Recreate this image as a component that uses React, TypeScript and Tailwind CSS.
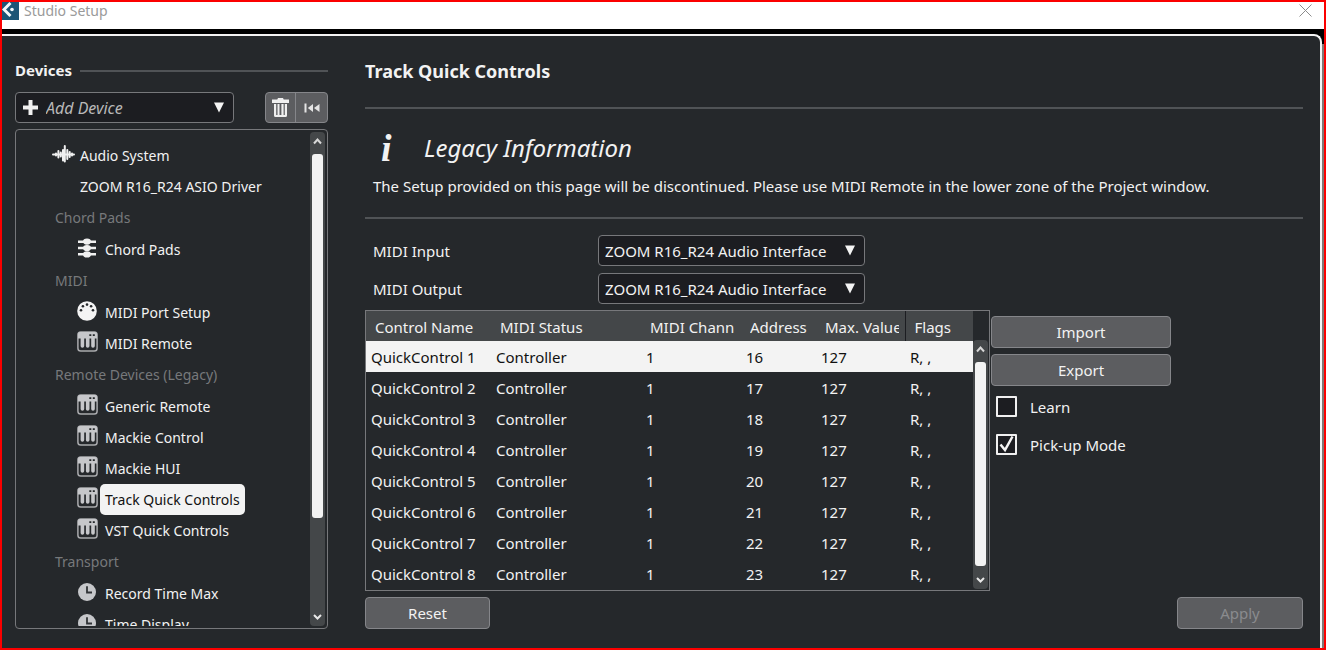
import React, { useState } from 'react';
import clsx from 'clsx';

type IconName = 'wave' | 'chord' | 'midi' | 'remote' | 'clock';

interface Device {
  name: string;
  icon: IconName;
}

interface DeviceGroup {
  title: string;
  devices: Device[];
}

const groups: DeviceGroup[] = [
  { title: 'Chord Pads', devices: [{ name: 'Chord Pads', icon: 'chord' }] },
  {
    title: 'MIDI',
    devices: [
      { name: 'MIDI Port Setup', icon: 'midi' },
      { name: 'MIDI Remote', icon: 'remote' },
    ],
  },
  {
    title: 'Remote Devices (Legacy)',
    devices: [
      { name: 'Generic Remote', icon: 'remote' },
      { name: 'Mackie Control', icon: 'remote' },
      { name: 'Mackie HUI', icon: 'remote' },
      { name: 'Track Quick Controls', icon: 'remote' },
      { name: 'VST Quick Controls', icon: 'remote' },
    ],
  },
  {
    title: 'Transport',
    devices: [
      { name: 'Record Time Max', icon: 'clock' },
      { name: 'Time Display', icon: 'clock' },
    ],
  },
];

const columns = [
  { label: 'Control Name', width: 'w-[125px]' },
  { label: 'MIDI Status', width: 'w-[150px]' },
  { label: 'MIDI Chann', width: 'w-[100px]' },
  { label: 'Address', width: 'w-[75px]' },
  { label: 'Max. Value', width: 'w-[89px]' },
  { label: 'Flags', width: 'w-[68px]' },
];

const controls = [16, 17, 18, 19, 20, 21, 22, 23].map((address, i) => ({
  name: `QuickControl ${i + 1}`,
  status: 'Controller',
  channel: 1,
  address,
  max: 127,
  flags: 'R, ,',
}));

function DeviceIcon({ icon }: { icon: IconName }) {
  switch (icon) {
    case 'wave':
      return (
        <svg width="23" height="18" viewBox="0 0 23 18" stroke="#f0f0f0" strokeWidth="2" strokeLinecap="round" fill="none">
          <path d="M1 9.5h21M4 8.5v2M6.4 6v6.5M8.8 7.5v4M11 5v10.5M12.8 1v15.5M15.3 5v9M17.7 7v5M20 8.5v2" />
        </svg>
      );
    case 'chord':
      return (
        <svg width="20" height="20" viewBox="0 0 20 20" fill="#f0f0f0">
          <path d="M1 2.5h18v2.4H1zM1 8.8h18v2.4H1zM1 15.1h18v2.4H1z" />
          <ellipse cx="10" cy="3.6" rx="4" ry="3.1" />
          <ellipse cx="10" cy="10" rx="4" ry="3.1" />
          <ellipse cx="10" cy="16.4" rx="4" ry="3.1" />
        </svg>
      );
    case 'midi':
      return (
        <svg width="20" height="20" viewBox="0 0 20 20">
          <circle cx="10" cy="10" r="9.8" fill="#f4f4f4" />
          <g fill="#25282b">
            <circle cx="4" cy="9.2" r="1.3" />
            <circle cx="5.9" cy="5.2" r="1.3" />
            <circle cx="10" cy="3.6" r="1.3" />
            <circle cx="14.1" cy="5.2" r="1.3" />
            <circle cx="16" cy="9.2" r="1.3" />
          </g>
        </svg>
      );
    case 'remote':
      return (
        <svg width="21" height="21" viewBox="0 0 21 21">
          <rect x="0.9" y="0.9" width="19.2" height="19.2" rx="2.8" fill="#25282b" stroke="#a9aaad" strokeWidth="1.5" />
          <path d="M1 3a2 2 0 0 1 2-2h15a2 2 0 0 1 2 2v4.5H1z" fill="#c6c7ca" />
          <path d="M3.6 7h3.6v8a1.8 1.8 0 0 1-3.6 0zM8.9 7h3.6v8a1.8 1.8 0 0 1-3.6 0zM14.2 7h3.6v8a1.8 1.8 0 0 1-3.6 0z" fill="#c6c7ca" />
          <path d="M12.3 3.2h2v1.8h-2zM15.8 3.2h2v1.8h-2z" fill="#25282b" />
        </svg>
      );
    case 'clock':
      return (
        <svg width="20" height="20" viewBox="0 0 20 20">
          <circle cx="10" cy="10" r="9" fill="#c6c7ca" />
          <path d="M10 4.2v6.3h5" stroke="#303336" strokeWidth="1.8" fill="none" />
        </svg>
      );
  }
}

function Caret({ className }: { className?: string }) {
  return (
    <svg className={clsx('pointer-events-none absolute', className)} width="10" height="11" viewBox="0 0 10 11" fill="#f4f4f4">
      <path d="M0 0.5h10L5 10.5z" />
    </svg>
  );
}

function ScrollBar({ thumb }: { thumb: string }) {
  return (
    <div className="flex w-[15px] shrink-0 flex-col items-center rounded-sm bg-[#444749]">
      <svg className="h-[22px] shrink-0" width="9" height="22" viewBox="0 0 9 22" fill="none" stroke="#d8d8d8" strokeWidth="2">
        <path d="M1 11.5L4.5 7.5L8 11.5" />
      </svg>
      <div className="flex w-[11px] flex-1 flex-col">
        <div className={clsx('rounded-[3px] bg-[#f3f3f3]', thumb)} />
      </div>
      <svg className="h-[22px] shrink-0" width="9" height="22" viewBox="0 0 9 22" fill="none" stroke="#e8e8e8" strokeWidth="2">
        <path d="M1 11L4.5 14.5L8 11" />
      </svg>
    </div>
  );
}

function PortSelect({ id, label }: { id: string; label: string }) {
  return (
    <div className="flex h-[31px] items-center">
      <label htmlFor={id} className="w-[225px]">{label}</label>
      <div className="relative flex items-center">
        <select id={id} className="h-[31px] w-[267px] appearance-none rounded-[4px] border border-[#77787b] bg-[#1c1d21] pl-1.5 pr-7">
          <option>ZOOM R16_R24 Audio Interface</option>
        </select>
        <Caret className="right-[10px]" />
      </div>
    </div>
  );
}

function PushButton({ children, disabled, className }: { children: React.ReactNode; disabled?: boolean; className: string }) {
  return (
    <button
      disabled={disabled}
      className={clsx('h-8 rounded-[4px] border border-[#85868a] bg-[#5c5d60] disabled:text-[#8a8b8e]', className)}
    >
      {children}
    </button>
  );
}

function CheckBox({ label, defaultChecked }: { label: string; defaultChecked?: boolean }) {
  return (
    <label className="flex h-[21px] items-center gap-[13px]">
      <span className="relative flex">
        <input type="checkbox" defaultChecked={defaultChecked} className="peer size-[21px] appearance-none rounded-[1px] border-2 border-[#f0f0f0] bg-[#1c1d21]" />
        <svg className="pointer-events-none absolute inset-0 hidden peer-checked:block" width="21" height="21" viewBox="0 0 21 21" fill="none" stroke="#f4f4f4" strokeWidth="2.5">
          <path d="M4.5 10.5L9 16L16.5 2.5" />
        </svg>
      </span>
      {label}
    </label>
  );
}

export default function App() {
  const [device, setDevice] = useState('Track Quick Controls');
  const [selected, setSelected] = useState(0);

  const deviceButton = (name: string) => (
    <button
      onClick={() => setDevice(name)}
      className={clsx('h-[31px] whitespace-nowrap rounded-[5px] px-[5px]', name === device && 'bg-[#f3f3f3] text-[#111]')}
    >
      {name}
    </button>
  );

  return (
    <div className="flex h-screen flex-col border-2 border-[#fb0000] bg-black font-['Noto_Sans','Open_Sans',sans-serif] text-[15px] leading-5 text-[#f2f2f2]">
      <header className="flex h-[27px] shrink-0 items-start justify-between bg-white pr-3 text-sm leading-[18px] text-[#9a9a9a]">
        <div className="flex items-start gap-[5px]">
          <svg width="17" height="18" viewBox="0 0 17 18">
            <path d="M0 0h17v18H0z" fill="#1d5576" />
            <path d="M8.5 1L2 7.5L8.5 14" stroke="#f4f8fa" strokeWidth="3" fill="none" />
            <circle cx="10" cy="7.5" r="1.8" fill="#f4f8fa" />
          </svg>
          <span>Studio Setup</span>
        </div>
        <button aria-label="Close" className="pt-0.5">
          <svg width="13" height="13" viewBox="0 0 13 13" stroke="#8c8c8c" strokeWidth="1">
            <path d="M0.5 0.5l12 12M12.5 0.5l-12 12" />
          </svg>
        </button>
      </header>

      <div className="mt-[5px] flex min-h-0 flex-1 bg-gradient-to-b from-black from-[10px] to-[#7d7a78] to-[10px] pr-0.5">
        <div className="flex min-h-0 flex-1 gap-[37px] rounded-tr-lg border-t-2 border-r-2 border-[#f4f4f4] bg-[#25282b] pt-6 pr-[17px] pb-[19px] pl-[13px]">
          <aside className="flex w-[313px] shrink-0 flex-col">
            <div className="flex h-5 items-center gap-2">
              <h2 className="font-bold">Devices</h2>
              <div className="mt-0.5 h-0.5 flex-1 bg-[#505356]" />
            </div>

            <div className="mt-3 flex h-[31px] justify-between">
              <div className="relative flex items-center">
                <svg className="pointer-events-none absolute left-2" width="15" height="15" viewBox="0 0 15 15" fill="#f0f0f0">
                  <path d="M5.5 0h4v5.5H15v4H9.5V15h-4V9.5H0v-4h5.5z" />
                </svg>
                <select aria-label="Add Device" className="h-[31px] w-[219px] appearance-none rounded-[4px] border border-[#77787b] bg-[#1c1d21] pl-[30px] text-base italic text-[#b8b8b8]">
                  <option>Add Device</option>
                </select>
                <Caret className="right-[10px]" />
              </div>
              <div className="flex divide-x divide-[#85868a] rounded-[4px] border border-[#85868a] bg-[#5c5d60]">
                <button aria-label="Remove device" className="flex w-[30px] items-center justify-center">
                  <svg width="17" height="19" viewBox="0 0 17 19" fill="#f0f0f0">
                    <path d="M6 0h5l.7 1.5H17V5H0V1.5h5.3zM2 6h2.2v11H5.5V6h2v11h1.9V6h2.2v11h1.2V6H15v11.5a1.5 1.5 0 0 1-1.5 1.5h-10A1.5 1.5 0 0 1 2 17.5z" />
                  </svg>
                </button>
                <button aria-label="Reset devices" className="flex w-[31px] items-center justify-center">
                  <svg width="16" height="10" viewBox="0 0 16 10" fill="#e4e4e4">
                    <path d="M0.5 0.5h2v9h-2zM9 1v8L3.8 5zM15.5 1v8L10 5z" />
                  </svg>
                </button>
              </div>
            </div>

            <div className="mt-1.5 flex min-h-0 flex-1 justify-between rounded-[4px] border border-[#77787b] py-0.5 pr-0.5 text-sm">
              <div className="min-w-0 flex-1 overflow-hidden pt-2 pl-9">
                <div className="flex h-[31px] items-center">
                  <span className="flex pb-1"><DeviceIcon icon="wave" /></span>
                  {deviceButton('Audio System')}
                </div>
                <div className="flex h-[31px] items-center pl-[23px]">{deviceButton('ZOOM R16_R24 ASIO Driver')}</div>
                {groups.map(group => (
                  <section key={group.title}>
                    <h3 className="flex h-[31px] items-center pl-[3px] text-[#77797b]">{group.title}</h3>
                    <ul className="mt-px pl-[25px]">
                      {group.devices.map(item => (
                        <li key={item.name} className="flex h-[31px] items-center">
                          <span className="flex w-[23px] pb-1"><DeviceIcon icon={item.icon} /></span>
                          {deviceButton(item.name)}
                        </li>
                      ))}
                    </ul>
                  </section>
                ))}
              </div>
              <ScrollBar thumb="h-[364px]" />
            </div>
          </aside>

          <main className="flex min-w-0 flex-1 flex-col">
            <h1 className="text-lg font-bold leading-[22px]">Track Quick Controls</h1>

            <section className="mt-[25px] h-28 border-y-2 border-[#505356] pt-[19px] pl-2">
              <div className="flex h-10 items-center">
                <span className="w-[51px] pl-2 font-['Liberation_Serif',serif] text-[38px] font-bold italic leading-10">i</span>
                <h2 className="text-2xl italic">Legacy Information</h2>
              </div>
              <p className="mt-2">
                The Setup provided on this page will be discontinued. Please use MIDI Remote in the lower zone of the Project window.
              </p>
            </section>

            <div className="mt-4 flex flex-col gap-[7px] pl-2">
              <PortSelect id="midi-input" label="MIDI Input" />
              <PortSelect id="midi-output" label="MIDI Output" />
            </div>

            <div className="mt-1.5 flex items-start gap-px">
              <div className="flex shrink-0 items-start border border-[#77787b] pb-px">
                <table className="w-[607px] table-fixed border-collapse text-left">
                  <thead>
                    <tr className="h-[30px] bg-[#444749]">
                      {columns.map((col, i) => (
                        <th
                          key={col.label}
                          className={clsx('p-0 pt-0.5 pr-1.5 pl-[9px] font-normal', col.width, i === columns.length - 1 && 'border-l border-[#1c1d21]')}
                        >
                          <div className="overflow-hidden whitespace-nowrap">{col.label}</div>
                        </th>
                      ))}
                    </tr>
                  </thead>
                  <tbody>
                    {controls.map((row, i) => (
                      <tr
                        key={row.name}
                        onClick={() => setSelected(i)}
                        className={clsx('h-[31px] *:p-0 *:pl-[5px] *:whitespace-nowrap', i === selected && 'bg-[#f3f3f3] text-[#111]')}
                      >
                        <td>{row.name}</td>
                        <td>{row.status}</td>
                        <td>{row.channel}</td>
                        <td>{row.address}</td>
                        <td>{row.max}</td>
                        <td>{row.flags}</td>
                      </tr>
                    ))}
                  </tbody>
                </table>
                <div className="flex self-stretch pt-[29px] pr-px">
                  <ScrollBar thumb="h-[204px]" />
                </div>
              </div>

              <div className="flex w-[180px] flex-col gap-1.5 pt-1.5">
                <PushButton className="w-full">Import</PushButton>
                <PushButton className="w-full">Export</PushButton>
                <div className="mt-1 flex flex-col gap-[17px] pl-[5px]">
                  <CheckBox label="Learn" />
                  <CheckBox label="Pick-up Mode" defaultChecked />
                </div>
              </div>
            </div>

            <div className="mt-auto flex justify-between">
              <PushButton className="w-[125px]">Reset</PushButton>
              <PushButton className="w-[126px]" disabled>Apply</PushButton>
            </div>
          </main>
        </div>
      </div>
    </div>
  );
}
